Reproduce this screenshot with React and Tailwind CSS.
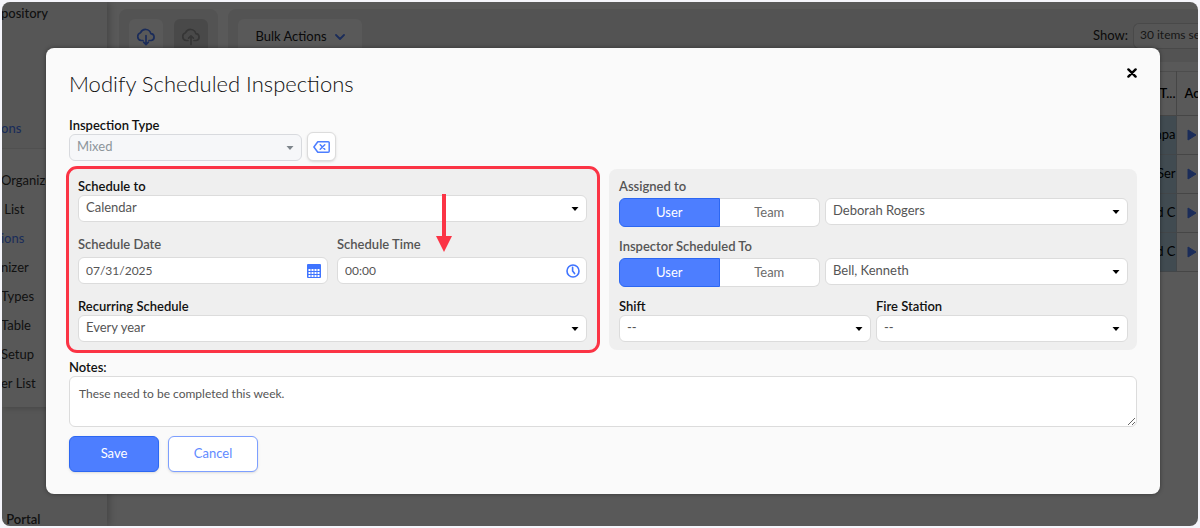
import React from 'react';

const sidebarItems = [
  { label: 'Organize' },
  { label: ' List' },
  { label: 'ions', active: true },
  { label: 'nizer' },
  { label: 'Types' },
  { label: 'Table' },
  { label: 'Setup' },
  { label: 'er List' }
];

const tableRows = ['npa', 'Ser', 'd C', 'd C'];

const Caret = ({ className = 'text-black' }) => (
  <svg
    viewBox="0 0 8 4"
    aria-hidden="true"
    className={`pointer-events-none absolute right-2 top-1/2 h-1 w-2 -translate-y-1/2 ${className}`}
  >
    <path d="M.5 0h7L4 4z" fill="currentColor" />
  </svg>
);

const CloudIcon = ({ up, className }) => (
  <svg viewBox="0 0 20 18" aria-hidden="true" fill="none" stroke="currentColor" strokeWidth="1.7" strokeLinecap="round" strokeLinejoin="round" className={className}>
    <path d="M7 12.5H5.2A4 4 0 0 1 4.6 4.7 5.4 5.4 0 0 1 14.8 5.6 3.5 3.5 0 0 1 15.4 12.5H13" />
    {up ? <path d="M10 16.5V8M7.6 10.2 10 7.8l2.4 2.4" /> : <path d="M10 7.5v9M7.6 14.2l2.4 2.4 2.4-2.4" />}
  </svg>
);

const ClearIcon = () => (
  <svg viewBox="0 0 17 12" aria-hidden="true" fill="none" stroke="currentColor" strokeWidth="1.5" strokeLinecap="round" strokeLinejoin="round" className="h-3 w-[17px]">
    <path d="M4.8.8h10.4a1 1 0 0 1 1 1v8.4a1 1 0 0 1-1 1H4.8L.9 6z" />
    <path d="m7.2 3.7 4.6 4.6M11.8 3.7 7.2 8.3" />
  </svg>
);

const CalendarIcon = () => (
  <svg viewBox="0 0 14 14" aria-hidden="true" className="h-3.5 w-3.5">
    <rect width="14" height="14" rx="1" fill="currentColor" />
    <path d="M1.5 5h2v2h-2zM4.5 5h2v2h-2zM7.5 5h2v2h-2zM10.5 5h2v2h-2zM1.5 8h2v2h-2zM4.5 8h2v2h-2zM7.5 8h2v2h-2zM10.5 8h2v2h-2zM1.5 11h2v2h-2zM4.5 11h2v2h-2zM7.5 11h2v2h-2zM10.5 11h2v2h-2z" fill="#fff" />
  </svg>
);

const ClockIcon = () => (
  <svg viewBox="0 0 14 14" aria-hidden="true" fill="none" stroke="currentColor" strokeWidth="1.6" strokeLinecap="round" className="h-3.5 w-3.5">
    <circle cx="7" cy="7" r="6" />
    <path d="M6.6 3.2V7l2 2.6" />
  </svg>
);

const Label = ({ muted, className = '', ...props }) => (
  <label
    className={`block font-semibold leading-[18px] ${muted ? 'text-[#555]' : 'text-[#111]'} ${className}`}
    {...props}
  />
);

const Select = ({ id, value, disabled, className = '', ...props }) => (
  <div className={`relative ${className}`}>
    <select
      id={id}
      disabled={disabled}
      className="block h-[27px] w-full appearance-none rounded-md border border-[#dcdcdc] bg-white pb-px pl-[7px] pr-5 text-[#555] disabled:border-[#d8dade] disabled:bg-[#f6f7f9] disabled:text-[#8d959b] disabled:opacity-100"
      {...props}
    >
      <option>{value}</option>
    </select>
    <Caret className={disabled ? 'text-[#7d858b]' : 'text-black'} />
  </div>
);

const IconInput = ({ id, value, icon, buttonLabel }) => (
  <div className="flex h-[27px] items-center rounded-md border border-[#dcdcdc] bg-white pl-[7px] pr-1.5">
    <input id={id} type="text" defaultValue={value} className="min-w-0 flex-1 text-xs text-[#555] outline-none" />
    <button type="button" aria-label={buttonLabel} className="text-[#3f74ff]">
      {icon}
    </button>
  </div>
);

const UserTeamToggle = ({ name }) => (
  <div role="group" aria-label={name} className="grid h-[29px] w-[201px] shrink-0 grid-cols-2">
    <button type="button" aria-pressed="true" className="rounded-l-md border border-[#2c67f2] bg-[#4d7eff] text-white">
      User
    </button>
    <button type="button" aria-pressed="false" className="rounded-r-md border border-l-0 border-[#dcdcdc] bg-white text-[#6b6b6b]">
      Team
    </button>
  </div>
);

const Sidebar = () => (
  <aside className="flex w-[105px] shrink-0 flex-col bg-[#f7f7f7] -indent-px shadow-[2px_0_8px_rgba(0,0,0,0.25)]">
    <div className="flex h-[146px] flex-col justify-between pb-2.5 pt-px font-medium leading-[20px]">
      <span className="text-[#333]">pository</span>
      <span className="text-[#4d7eff]">ons</span>
    </div>
    <nav className="border-t border-[#e4e4e4] bg-[#fbfbfb] pb-[9px] pt-[17px] shadow-md">
      {sidebarItems.map((item) => (
        <a
          key={item.label}
          href="#"
          className={`block whitespace-pre leading-[29px] ${item.active ? 'text-[#4d7eff]' : 'text-[#333]'}`}
        >
          {item.label}
        </a>
      ))}
    </nav>
    <span className="mt-auto whitespace-pre pl-0.5 font-semibold leading-[14px] text-[#333]"> Portal</span>
  </aside>
);

const Toolbar = () => (
  <div className="flex gap-2.5 pl-3 pt-[7px]">
    <div className="flex h-[53px] gap-[11px] rounded-lg bg-[#ededed] px-2.5 pt-2.5">
      <button type="button" aria-label="Download" className="flex h-9 w-[34px] items-center justify-center rounded-md bg-white text-[#4d7eff]">
        <CloudIcon className="h-[18px] w-5" />
      </button>
      <button type="button" aria-label="Upload" className="flex h-9 w-[34px] items-center justify-center rounded-md bg-[#d2d2d2] text-[#9a9a9a]">
        <CloudIcon up className="h-[18px] w-5" />
      </button>
    </div>
    <div className="flex h-[53px] flex-1 items-start justify-between rounded-l-lg bg-[#ededed] pl-2.5 pt-2.5">
      <button type="button" className="flex h-9 w-[124px] items-center justify-center gap-2 rounded-md bg-white text-[#222]">
        Bulk Actions
        <svg viewBox="0 0 10 6" aria-hidden="true" className="h-1.5 w-2.5 text-[#4d7eff]">
          <path d="m1 1 4 4 4-4" fill="none" stroke="currentColor" strokeWidth="1.8" strokeLinecap="round" strokeLinejoin="round" />
        </svg>
      </button>
      <div className="flex items-center gap-[5px] pt-1">
        <span className="text-[#222]">Show:</span>
        <div className="h-[26px] w-[65px] whitespace-nowrap rounded-l-md border border-r-0 border-[#d0d0d0] bg-[#f7f7f7] pl-1.5 text-xs leading-[22px] text-[#444]">
          30 items se
        </div>
      </div>
    </div>
  </div>
);

const BackgroundTable = () => (
  <table className="ml-3 mt-[9px] w-[calc(100%-12px)] table-fixed border-collapse border-l border-t border-[#dcdcdc]">
    <thead>
      <tr className="h-11 text-left text-black">
        <th className="border-b border-r border-[#c8c8c8] text-right font-semibold">T...</th>
        <th className="w-[22px] whitespace-nowrap border-b border-[#c8c8c8] pl-2 font-semibold">Ac</th>
      </tr>
    </thead>
    <tbody>
      {tableRows.map((text, index) => (
        <tr key={index} className="h-[39px] text-black">
          <td className="border-b border-r border-[#bcc8d0] bg-[#b9d7e8] text-right">{text}</td>
          <td className="w-[22px] border-b border-[#c8c8c8] pl-2.5">
            <svg viewBox="0 0 10 12" aria-hidden="true" className="h-3 w-2.5 text-[#4d7eff]">
              <path d="M1 1v10l8-5z" fill="currentColor" stroke="currentColor" strokeLinejoin="round" />
            </svg>
          </td>
        </tr>
      ))}
    </tbody>
  </table>
);

const InspectionModal = () => (
  <form
    role="dialog"
    aria-labelledby="modal-title"
    onSubmit={(e) => e.preventDefault()}
    className="w-full self-start rounded-lg bg-[#fafafa] px-[23px] pb-[22px] shadow-[0_0_4px_rgba(0,0,0,0.4)]"
  >
    <header className="flex items-start justify-between pt-5">
      <h1 id="modal-title" className="text-[22px] font-light leading-8 text-[#111]">
        Modify Scheduled Inspections
      </h1>
      <button type="button" aria-label="Close" className="text-black">
        <svg viewBox="0 0 10 10" className="h-2.5 w-2.5">
          <path d="m1.4 1.4 7.2 7.2M8.6 1.4 1.4 8.6" stroke="currentColor" strokeWidth="2.4" strokeLinecap="round" />
        </svg>
      </button>
    </header>

    <div className="mt-4">
      <Label htmlFor="inspection-type">Inspection Type</Label>
      <div className="flex items-end gap-[5px]">
        <Select id="inspection-type" value="Mixed" disabled className="w-[233px]" />
        <button type="button" aria-label="Clear inspection type" className="-mt-0.5 flex h-[29px] w-[29px] items-center justify-center rounded-md border border-[#dcdcdc] bg-white text-[#4d7eff] shadow-sm">
          <ClearIcon />
        </button>
      </div>
    </div>

    <div className="mt-2 grid grid-cols-2 gap-3">
      <section className="relative flex flex-col gap-[13px] rounded-lg bg-[#efefef] py-2 pl-[9px] pr-2.5 outline-3 outline-[#fb3445]">
        <div>
          <Label htmlFor="schedule-to">Schedule to</Label>
          <Select id="schedule-to" value="Calendar" />
        </div>
        <div className="grid grid-cols-2 gap-[9px]">
          <div>
            <Label htmlFor="schedule-date" muted className="mb-1">Schedule Date</Label>
            <IconInput id="schedule-date" value="07/31/2025" icon={<CalendarIcon />} buttonLabel="Pick a date" />
          </div>
          <div>
            <Label htmlFor="schedule-time" muted className="mb-1">Schedule Time</Label>
            <IconInput id="schedule-time" value="00:00" icon={<ClockIcon />} buttonLabel="Pick a time" />
          </div>
        </div>
        <div>
          <Label htmlFor="recurring">Recurring Schedule</Label>
          <Select id="recurring" value="Every year" />
        </div>
        {/* callout arrow pointing at the time field */}
        <svg viewBox="0 0 16 58" aria-hidden="true" className="pointer-events-none absolute left-[367px] top-[25px] h-[58px] w-4">
          <path d="M6 0h4v42h6L8 58 0 42h6z" fill="#fb3445" />
        </svg>
      </section>

      <section className="flex flex-col gap-2.5 rounded-lg bg-[#efefef] py-2 pl-2.5 pr-[9px]">
        <div>
          <Label htmlFor="assigned-to" muted className="mb-[3px]">Assigned to</Label>
          <div className="flex items-start gap-[5px]">
            <UserTeamToggle name="Assigned to" />
            <Select id="assigned-to" value="Deborah Rogers" className="flex-1" />
          </div>
        </div>
        <div>
          <Label htmlFor="inspector" muted className="mb-[3px]">Inspector Scheduled To</Label>
          <div className="flex items-start gap-[5px]">
            <UserTeamToggle name="Inspector Scheduled To" />
            <Select id="inspector" value="Bell, Kenneth" className="flex-1" />
          </div>
        </div>
        <div className="grid grid-cols-2 gap-[5px]">
          <div>
            <Label htmlFor="shift">Shift</Label>
            <Select id="shift" value="--" />
          </div>
          <div>
            <Label htmlFor="fire-station">Fire Station</Label>
            <Select id="fire-station" value="--" />
          </div>
        </div>
      </section>
    </div>

    <Label htmlFor="notes" className="mt-2">Notes:</Label>
    <textarea
      id="notes"
      defaultValue="These need to be completed this week."
      className="block h-[51px] w-full rounded-md border border-[#dcdcdc] bg-white px-[9px] py-2 text-xs leading-[18px] text-[#555]"
    />

    <div className="mt-[9px] flex gap-[9px]">
      <button type="submit" className="h-9 w-[90px] rounded-md border border-[#2c67f2] bg-[#4d7eff] text-white shadow-sm">
        Save
      </button>
      <button type="button" className="h-9 w-[90px] rounded-md border border-[#7d9fff] bg-white text-[#5f8aff] shadow-sm">
        Cancel
      </button>
    </div>
  </form>
);

const App = () => {
  return (
    <div className="min-h-screen bg-[#f5f5fb] p-0.5 font-['Lato',sans-serif] text-[13px]">
      <div className="grid min-h-[calc(100vh-4px)] overflow-hidden rounded-lg bg-white">
        <div className="col-start-1 row-start-1 flex min-w-0">
          <Sidebar />
          <main className="min-w-0 flex-1">
            <Toolbar />
            <BackgroundTable />
          </main>
        </div>
        <div className="z-10 col-start-1 row-start-1 flex min-w-0 bg-black/65 pb-8 pl-11 pr-[38px] pt-[46px]">
          <InspectionModal />
        </div>
      </div>
    </div>
  );
};

export default App;
